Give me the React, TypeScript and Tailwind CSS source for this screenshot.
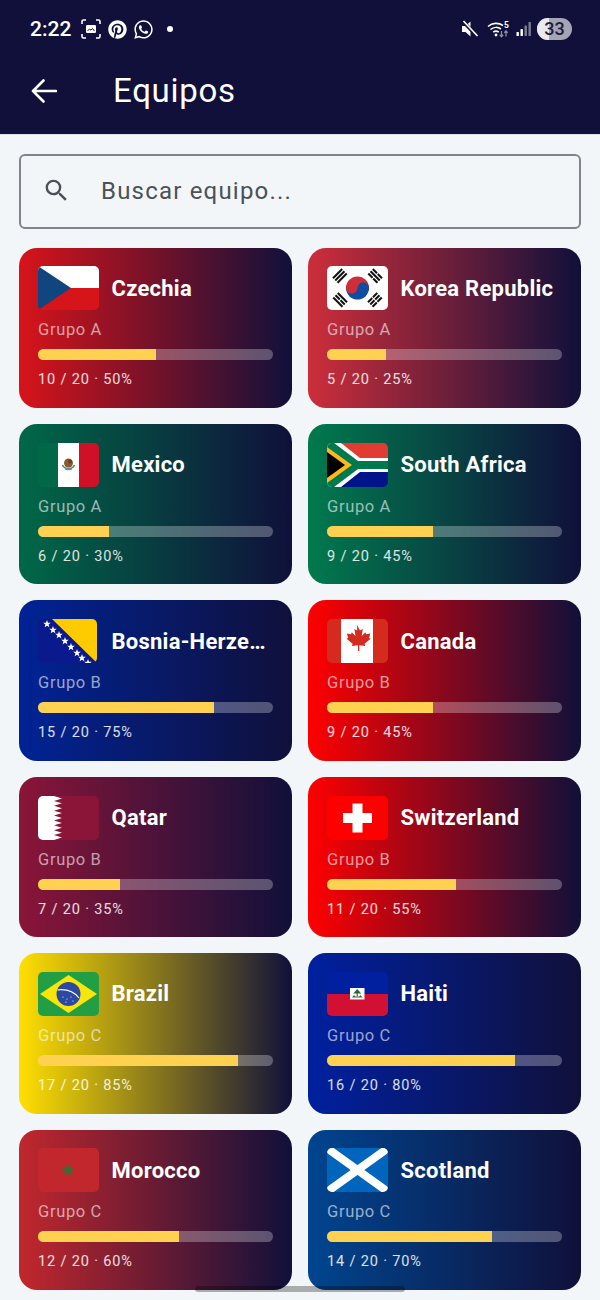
import React from "react";
import { FaPinterest, FaWhatsapp } from "react-icons/fa";

const FLAG_RED = "#d7141a";

function FlagSvg({ children, width = 61 }: { children: React.ReactNode; width?: number }) {
  return (
    <svg
      viewBox={`0 0 ${width} 44`}
      width={width}
      height={44}
      className="block rounded-[5px] shrink-0"
    >
      {children}
    </svg>
  );
}

function starPoints(cx: number, cy: number, r: number) {
  const pts: string[] = [];
  for (let i = 0; i < 10; i++) {
    const rad = i % 2 === 0 ? r : r * 0.42;
    const a = -Math.PI / 2 + (i * Math.PI) / 5;
    pts.push(`${cx + rad * Math.cos(a)},${cy + rad * Math.sin(a)}`);
  }
  return pts.join(" ");
}

const Czechia = () => (
  <FlagSvg>
    <rect width="61" height="22" fill="#ffffff" />
    <rect y="22" width="61" height="22" fill={FLAG_RED} />
    <polygon points="0,0 33,22 0,44" fill="#11457e" />
  </FlagSvg>
);

function Trigram({ x, y, angle, bars }: { x: number; y: number; angle: number; bars: number[][] }) {
  return (
    <g transform={`translate(${x} ${y}) rotate(${angle})`}>
      {bars.map((row, i) =>
        row.length === 1 ? (
          <rect key={i} x={-6.5} y={-4.4 + i * 3.2} width={13} height={2} fill="#111" />
        ) : (
          <g key={i}>
            <rect x={-6.5} y={-4.4 + i * 3.2} width={6} height={2} fill="#111" />
            <rect x={0.5} y={-4.4 + i * 3.2} width={6} height={2} fill="#111" />
          </g>
        )
      )}
    </g>
  );
}

const Korea = () => (
  <FlagSvg>
    <rect width="61" height="44" fill="#ffffff" />
    <path d="M19 22a11.5 11.5 0 0 1 23 0z" fill="#cd2e3a" />
    <path d="M19 22a11.5 11.5 0 0 0 23 0z" fill="#0f4da0" />
    <circle cx="24.75" cy="22" r="5.75" fill="#cd2e3a" />
    <circle cx="36.25" cy="22" r="5.75" fill="#0f4da0" />
    <Trigram x={13} y={10} angle={-45} bars={[[1], [1], [1]]} />
    <Trigram x={48} y={10} angle={45} bars={[[1, 1], [1], [1, 1]]} />
    <Trigram x={13} y={34} angle={45} bars={[[1], [1, 1], [1]]} />
    <Trigram x={48} y={34} angle={-45} bars={[[1, 1], [1, 1], [1, 1]]} />
  </FlagSvg>
);

const Mexico = () => (
  <FlagSvg>
    <rect width="20.5" height="44" fill="#006847" />
    <rect x="20" width="21" height="44" fill="#ffffff" />
    <rect x="41" width="20" height="44" fill="#ce1126" />
    <ellipse cx="30.5" cy="20" rx="4.5" ry="4.5" fill="#8c5a2b" />
    <circle cx="32" cy="18.5" r="2" fill="#6b3f1d" />
    <path d="M24.5 22a6.5 6 0 0 0 12 0" fill="none" stroke="#3d8b5f" strokeWidth="1.6" />
    <ellipse cx="30.5" cy="26" rx="3.5" ry="1.2" fill="#5b8fa8" />
  </FlagSvg>
);

const SouthAfrica = () => (
  <FlagSvg>
    <rect width="61" height="22" fill="#e03c31" />
    <rect y="22" width="61" height="22" fill="#001489" />
    <polygon points="0,0 14,0 33,15 61,15 61,29 33,29 14,44 0,44" fill="#ffffff" />
    <polygon points="0,0 7,0 31,18 61,18 61,26 31,26 7,44 0,44" fill="#007a4d" />
    <polygon points="0,4 25,22 0,40" fill="#ffb81c" />
    <polygon points="0,9 18,22 0,35" fill="#000000" />
  </FlagSvg>
);

const Bosnia = () => (
  <FlagSvg width={59}>
    <rect width="59" height="44" fill="#0a1a8c" />
    <polygon points="14,0 59,0 59,44" fill="#fecb00" />
    {[
      [9, 5],
      [15, 11],
      [21, 16],
      [27, 22],
      [33, 28],
      [39, 34],
      [44, 39],
      [50, 44],
    ].map(([x, y]) => (
      <polygon key={x} points={starPoints(x, y, 4)} fill="#ffffff" />
    ))}
  </FlagSvg>
);

const Canada = () => (
  <FlagSvg>
    <rect width="61" height="44" fill="#d52b1e" />
    <rect x="14" width="32" height="44" fill="#ffffff" />
    <path
      d="M30 6l3 5.5 2.8-1.4-1.1 7 3.7-3.8 0.8 2 4.2-.8-1.4 4.4 1.6.9-6 5 .7 2.3-6-.8v5.7h-1.2l-.2-5.7-6 .8.7-2.3-6-5 1.6-.9-1.4-4.4 4.2.8.8-2 3.7 3.8-1.1-7 2.8 1.4z"
      fill="#d52b1e"
    />
  </FlagSvg>
);

function qatarEdge() {
  const teeth = 9;
  const h = 44 / teeth;
  let pts = "0,0 16,0";
  for (let i = 0; i < teeth; i++) {
    pts += ` 24,${(i + 0.5) * h} 16,${(i + 1) * h}`;
  }
  return pts + " 0,44";
}

const Qatar = () => (
  <FlagSvg>
    <rect width="61" height="44" fill="#8a1538" />
    <polygon points={qatarEdge()} fill="#ffffff" />
  </FlagSvg>
);

const Switzerland = () => (
  <FlagSvg>
    <rect width="61" height="44" fill="#ff0000" />
    <rect x="16" y="17" width="29" height="10" fill="#ffffff" />
    <rect x="25.5" y="7.5" width="10" height="29" fill="#ffffff" />
  </FlagSvg>
);

const Brazil = () => (
  <FlagSvg>
    <rect width="61" height="44" fill="#229e45" />
    <polygon points="30.5,3 59,22 30.5,41 2,22" fill="#f8e509" />
    <circle cx="30.5" cy="22" r="12" fill="#2b49a3" />
    <path d="M19.5 18c7.5-1 16 1 21.5 8" fill="none" stroke="#ffffff" strokeWidth="1.2" />
    {[
      [25, 25],
      [29, 27],
      [33, 25],
      [35, 29],
      [28, 30],
    ].map(([x, y]) => (
      <circle key={`${x}-${y}`} cx={x} cy={y} r="0.6" fill="#ffffff" />
    ))}
  </FlagSvg>
);

const Haiti = () => (
  <FlagSvg>
    <rect width="61" height="22" fill="#00209f" />
    <rect y="22" width="61" height="22" fill="#d21034" />
    <rect x="23" y="16" width="14.5" height="11.5" fill="#ffffff" />
    <path d="M30.2 17l4 4.5h-8z" fill="#1f6b3a" />
    <rect x="29.7" y="20" width="1" height="4.5" fill="#5a3a1a" />
    <path d="M25 25.5l2-2.5 1.5 1.5h3.5l1.5-1.5 2 2.5z" fill="#3f6b3a" />
  </FlagSvg>
);

const Morocco = () => (
  <FlagSvg>
    <rect width="61" height="44" fill="#c1272d" />
    <polygon points={starPoints(30, 22, 7)} fill="#3b6b35" />
  </FlagSvg>
);

const Scotland = () => (
  <FlagSvg>
    <rect width="61" height="44" fill="#0065bd" />
    <path d="M4 3l53 38M57 3L4 41" stroke="#ffffff" strokeWidth="8" strokeLinecap="round" />
  </FlagSvg>
);

const teams = [
  { name: "Czechia", group: "A", done: 10, pct: 50, bg: "from-[#d7141a]", flag: <Czechia /> },
  { name: "Korea Republic", group: "A", done: 5, pct: 25, bg: "from-[#cd2e3a]", flag: <Korea /> },
  { name: "Mexico", group: "A", done: 6, pct: 30, bg: "from-[#006847]", flag: <Mexico /> },
  { name: "South Africa", group: "A", done: 9, pct: 45, bg: "from-[#007a4d]", flag: <SouthAfrica /> },
  { name: "Bosnia-Herze…", group: "B", done: 15, pct: 75, bg: "from-[#002395]", flag: <Bosnia /> },
  { name: "Canada", group: "B", done: 9, pct: 45, bg: "from-[#ff0000]", flag: <Canada /> },
  { name: "Qatar", group: "B", done: 7, pct: 35, bg: "from-[#8a1538]", flag: <Qatar /> },
  { name: "Switzerland", group: "B", done: 11, pct: 55, bg: "from-[#ff0000]", flag: <Switzerland /> },
  { name: "Brazil", group: "C", done: 17, pct: 85, bg: "from-[#ffdf00]", flag: <Brazil /> },
  { name: "Haiti", group: "C", done: 16, pct: 80, bg: "from-[#00209f]", flag: <Haiti /> },
  { name: "Morocco", group: "C", done: 12, pct: 60, bg: "from-[#c1272d]", flag: <Morocco /> },
  { name: "Scotland", group: "C", done: 14, pct: 70, bg: "from-[#00458f]", flag: <Scotland /> },
];

type Team = (typeof teams)[number];

function TeamCard({ team }: { team: Team }) {
  return (
    <div className={`h-[160.4px] rounded-[18px] bg-linear-to-r/srgb ${team.bg} to-[#10103a] px-[19px] pt-[18.8px]`}>
      <div className="flex items-center gap-[12.5px]">
        <div className="w-[61px] shrink-0">{team.flag}</div>
        <p className="whitespace-nowrap pt-[1px] text-[22px] leading-[28px] font-bold tracking-[0.25px] text-white">
          {team.name}
        </p>
      </div>
      <p className="mt-[10px] text-[16.5px] leading-[20px] tracking-[0.65px] text-white/60">Grupo {team.group}</p>
      <div className="mt-[9px] h-[11px] overflow-hidden rounded-full bg-white/28">
        <div className="h-full bg-[#ffd150]" style={{ width: `${team.pct}%` }} />
      </div>
      <p className="mt-[10px] text-[14.5px] leading-[20px] tracking-[0.85px] text-white/85">
        {team.done} / 20 · {team.pct}%
      </p>
    </div>
  );
}

function StatusBar() {
  return (
    <div className="flex h-[56px] items-center justify-between pl-[30px] pr-[28px] pt-[2px] text-white">
      <div className="flex items-center">
        <span className="w-[51px] text-[21px] leading-none font-medium">2:22</span>
        <svg width="20" height="20" viewBox="0 0 20 20" fill="none" stroke="#fff" strokeWidth="1.6" className="mr-[7px]">
          <path d="M1 5V2.5A1.5 1.5 0 0 1 2.5 1H5M15 1h2.5A1.5 1.5 0 0 1 19 2.5V5M19 15v2.5a1.5 1.5 0 0 1-1.5 1.5H15M5 19H2.5A1.5 1.5 0 0 1 1 17.5V15" />
          <rect x="5" y="6" width="10" height="8" rx="1.2" fill="#fff" stroke="none" />
          <path d="M6.5 12l2-2 1.5 1.2 1.5-1.7 2 2.5" stroke="#10103a" strokeWidth="1" />
        </svg>
        <FaPinterest size={19} className="mr-[6px]" />
        <FaWhatsapp size={21} className="mr-[13px]" />
        <span className="h-[6px] w-[6px] rounded-full bg-white" />
      </div>
      <div className="flex items-center">
        <svg width="18" height="18" viewBox="0 0 18 18" className="mr-[8px]">
          <path d="M1 6h3.5L9.5 1.5v15L4.5 12H1z" fill="#fff" />
          <path d="M2 1.5L16.5 16.5" stroke="#10103a" strokeWidth="3.5" />
          <path d="M2.5 1L16.5 16" stroke="#fff" strokeWidth="1.7" />
        </svg>
        <svg width="24" height="18" viewBox="0 0 24 18" fill="none" className="mr-[5px]">
          <path d="M1 6.5a12 12 0 0 1 15-1" stroke="#fff" strokeWidth="1.6" />
          <path d="M3.5 9.5a8.5 8.5 0 0 1 10.5-.5" stroke="#fff" strokeWidth="1.6" />
          <path d="M6.2 12.2a4.6 4.6 0 0 1 5.6 0" stroke="#fff" strokeWidth="1.6" />
          <circle cx="9" cy="15" r="1.4" fill="#fff" />
          <path d="M14.5 11v5.5M12.8 14.8l1.7 1.9 1.7-1.9" stroke="#8d8da3" strokeWidth="1.3" />
          <path d="M19 16.5V11M17.3 12.8L19 11l1.7 1.8" stroke="#8d8da3" strokeWidth="1.3" />
          <text x="17" y="7.5" fill="#fff" fontSize="8.5" fontWeight="700" fontFamily="Roboto, sans-serif">5</text>
        </svg>
        <svg width="16" height="16" viewBox="0 0 16 16" className="mr-[5px]">
          <rect x="0.5" y="11" width="2.4" height="4" rx="0.6" fill="#fff" />
          <rect x="4.5" y="8" width="2.4" height="7" rx="0.6" fill="#fff" />
          <rect x="8.5" y="4.5" width="2.4" height="10.5" rx="0.6" fill="#7c7c92" />
          <rect x="12.5" y="1" width="2.4" height="14" rx="0.6" fill="#7c7c92" />
        </svg>
        <div className="relative flex h-[22px] w-[35px] items-center justify-center overflow-hidden rounded-full bg-[#a5a5b3]">
          <div className="absolute inset-y-0 left-0 w-[12px] bg-[#e9e9ee]" />
          <span className="relative text-[18px] leading-none font-medium text-[#1a1a40]">33</span>
        </div>
      </div>
    </div>
  );
}

export default function App() {
  return (
    <div className="relative h-[1300px] w-[600px] overflow-hidden bg-[#f3f6f8] [font-family:Roboto,sans-serif]">
      <header className="h-[135px] border-b border-[#dfe1ea] bg-[#10103a]">
        <StatusBar />
        <div className="flex h-[69px] items-center pl-[31px]">
          <svg width="26" height="26" viewBox="0 0 26 26" fill="none" stroke="#fff" strokeWidth="2.6" strokeLinecap="round" strokeLinejoin="round">
            <path d="M25 13H2M12.5 2.5L2 13l10.5 10.5" />
          </svg>
          <h1 className="ml-[56px] text-[33px] leading-none font-normal tracking-[0.7px] text-white">Equipos</h1>
        </div>
      </header>

      <main className="px-[19px] pt-[19px]">
        <div className="flex h-[75px] items-center rounded-[6px] border-2 border-[#7f858b] pb-[2px] pl-[21px]">
          <svg width="29" height="29" viewBox="0 0 24 24" fill="#4b5157" className="mr-[30px]">
            <path d="M15.5 14h-.79l-.28-.27A6.471 6.471 0 0 0 16 9.5 6.5 6.5 0 1 0 9.5 16c1.61 0 3.09-.59 4.23-1.57l.27.28v.79l5 4.99L20.49 19l-4.99-5zm-6 0C7.01 14 5 11.99 5 9.5S7.01 5 9.5 5 14 7.01 14 9.5 11.99 14 9.5 14z" />
          </svg>
          <span className="text-[24px] leading-none tracking-[1.2px] text-[#4b5157]">Buscar equipo...</span>
        </div>

        <div className="mt-[18.6px] grid grid-cols-2 gap-x-4 gap-y-4">
          {teams.map((team) => (
            <TeamCard key={team.name} team={team} />
          ))}
        </div>
      </main>

      <div className="absolute top-[1286px] left-[195px] h-[6px] w-[210px] rounded-full bg-black/30" />
    </div>
  );
}
